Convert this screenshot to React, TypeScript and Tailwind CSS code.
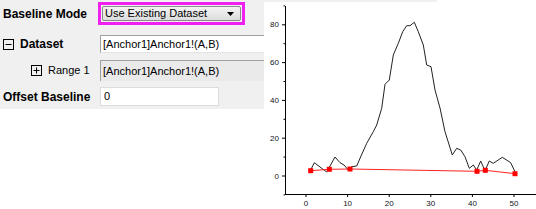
import React from 'react';

const BoxIcon: React.FC<{ plus?: boolean }> = ({ plus }) => (
  <svg width="11" height="11" viewBox="0 0 11 11" className="shrink-0">
    <rect x="0.5" y="0.5" width="10" height="10" fill="none" stroke="#000" />
    <line x1="2.5" y1="5.5" x2="8.5" y2="5.5" stroke="#000" />
    {plus && <line x1="5.5" y1="2.5" x2="5.5" y2="8.5" stroke="#000" />}
  </svg>
);

const CURVE: [number, number][] = [
  [310.7, 170], [314.3, 162.7], [326.7, 172], [335, 157], [340, 162.7], [344, 165],
  [348.3, 170], [351.7, 166.7], [356.7, 166], [361, 156], [366.7, 143.3], [373.3, 131.7],
  [376.7, 125], [381.7, 108.3], [385, 84.3], [389.3, 80], [393.3, 55], [398.3, 43.3],
  [402.7, 31.7], [406.7, 25.7], [410, 25.7], [414.3, 22.3], [418.3, 31.7], [423.3, 45],
  [426.7, 65], [431, 66.7], [435, 90], [440, 108], [445, 131.7], [452.3, 155],
  [456.7, 148.3], [460.7, 150], [465, 156.7], [469.3, 168.3], [473.3, 165], [476.7, 170],
  [480.7, 161], [485, 170.7], [489.3, 161], [493.3, 163.3], [502.3, 157.3], [510.7, 162.7],
  [515, 171.7],
];

const BASE: [number, number][] = [
  [310.7, 170.7], [329.3, 169.3], [350, 169], [477, 171.3], [485.3, 170.3], [515, 173.7],
];

const pts = (p: [number, number][]) => p.map(([x, y]) => `${x},${y}`).join(' ');

const Graph: React.FC = () => {
  const yMajor = [80, 60, 40, 20, 0];
  const yPix = (v: number) => 175.5 - v * 1.89;
  const xPix = (v: number) => 306 + v * 4.16;
  return (
    <svg width="272" height="207" viewBox="264 2 272 207" className="block">
      {/* y axis */}
      <line x1="285.5" y1="6" x2="285.5" y2="195" stroke="#000" />
      {[90, 70, 50, 30, 10, -10].map(v => (
        <line key={v} x1="283.5" y1={yPix(v) + 0.5} x2="285" y2={yPix(v) + 0.5} stroke="#000" />
      ))}
      {yMajor.map(v => (
        <g key={v}>
          <line x1="282" y1={yPix(v) + 0.5} x2="285" y2={yPix(v) + 0.5} stroke="#000" />
          <text x="279" y={yPix(v) + 3} fontSize="8" textAnchor="end" fill="#111122" fontFamily="Liberation Sans, Arial, sans-serif">{v}</text>
        </g>
      ))}
      {/* x axis */}
      <line x1="285" y1="194.5" x2="536" y2="194.5" stroke="#000" />
      {[0, 10, 20, 30, 40, 50].map(v => (
        <g key={v}>
          <line x1={xPix(v)} y1="195" x2={xPix(v)} y2="197" stroke="#000" />
          <text x={xPix(v)} y="206" fontSize="8" textAnchor="middle" fill="#111122" fontFamily="Liberation Sans, Arial, sans-serif">{v}</text>
        </g>
      ))}
      <polyline points={pts(CURVE)} fill="none" stroke="#222" strokeWidth="1" strokeLinejoin="round" />
      <polyline points={pts(BASE)} fill="none" stroke="#ff2020" strokeWidth="1" />
      {BASE.map(([x, y]) => (
        <rect key={x} x={x - 2.5} y={y - 2.5} width="5" height="5" fill="#ff0000" />
      ))}
    </svg>
  );
};

export default function App() {
  return (
    <div className="w-[536px] h-[209px] bg-white flex overflow-hidden font-['Liberation_Sans',Arial,sans-serif] text-black">
      <div className="w-[264px] h-[109px] bg-[#f0f0f0] flex flex-col shrink-0">
        {/* Baseline Mode */}
        <div className="h-[35px] flex items-start">
          <div className="w-[98px] pl-[3px] pt-[7px] text-[12px] font-bold leading-[14px]">Baseline Mode</div>
          <div className="mt-[2px] w-[147px] h-[23px] border-[3px] border-[#f020f0] p-[1px]">
            <div className="h-full flex items-center justify-between pl-[2px] pr-[6px] border border-[#8a8a8a] rounded-[2px] bg-gradient-to-b from-[#f4f4f4] to-[#dcdcdc] text-[11px] leading-none">
              <span>Use Existing Dataset</span>
              <svg width="7" height="4" viewBox="0 0 7 4"><polygon points="0,0 7,0 3.5,4" fill="#000" /></svg>
            </div>
          </div>
        </div>
        {/* Dataset */}
        <div className="h-[18px] flex items-center">
          <div className="w-[100px] flex items-center gap-[6px] pl-[3px]">
            <BoxIcon />
            <span className="text-[12px] font-bold leading-none">Dataset</span>
          </div>
          <div className="flex-1 h-full bg-white border-t border-l border-[#a0a0a0] border-b-[#e3e3e3] border-b flex items-center pl-[2px] text-[11px] leading-none">
            [Anchor1]Anchor1!(A,B)
          </div>
        </div>
        {/* Range 1 */}
        <div className="mt-[7px] h-[21px] flex items-center">
          <div className="w-[100px] flex items-center gap-[6px] pl-[31px]">
            <BoxIcon plus />
            <span className="text-[11px] leading-none">Range 1</span>
          </div>
          <div className="flex-1 h-full bg-[#eaeaea] border-t border-l border-[#a0a0a0] flex items-center pl-[2px] text-[11px] leading-none">
            [Anchor1]Anchor1!(A,B)
          </div>
        </div>
        {/* Offset Baseline */}
        <div className="mt-[6px] h-[19px] flex items-center">
          <div className="w-[100px] pl-[3px] text-[12px] font-bold leading-none">Offset Baseline</div>
          <div className="w-[119px] h-full bg-white border border-[#dcdcdc] flex items-center pl-[3px] text-[11px] leading-none">0</div>
        </div>
      </div>
      <div className="w-[272px] flex flex-col shrink-0">
        <div className="w-[173px] h-[2px] bg-[#f0f0f0]" />
        <Graph />
      </div>
    </div>
  );
}
